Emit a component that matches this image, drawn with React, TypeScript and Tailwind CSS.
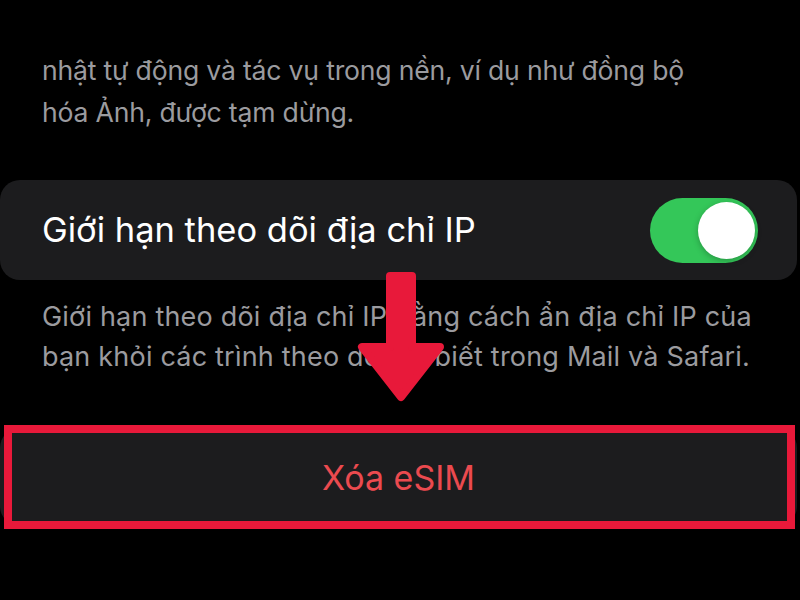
import React from "react";

function Toggle() {
  return (
    <div className="relative h-[65px] w-[108px] rounded-full bg-[#34c759]">
      <div className="absolute right-[3px] top-[4px] h-[57px] w-[57px] rounded-full bg-white shadow-[0_2px_6px_rgba(0,0,0,0.25)]" />
    </div>
  );
}

function DownArrow() {
  return (
    <svg
      className="pointer-events-none absolute left-[356px] top-[270px]"
      width="90"
      height="134"
      viewBox="0 0 90 134"
    >
      <path
        d="M34 6 L56 6 L56 77 L84 77 L45 127 L6 77 L34 77 Z"
        fill="#e8193a"
        stroke="#e8193a"
        strokeWidth="8"
        strokeLinejoin="round"
      />
    </svg>
  );
}

export default function App() {
  return (
    <div
      className="relative h-[600px] w-[800px] overflow-hidden bg-black"
      style={{ fontFamily: "Inter, 'Noto Sans', sans-serif" }}
    >
      <div className="flex flex-col">
        <p className="pl-[42px] pr-[40px] pt-[49px] text-[26.6px] leading-[42px] tracking-[-0.2px] text-[#9b9b9f]">
          nhật tự động và tác vụ trong nền, ví dụ như đồng bộ
          <br />
          hóa Ảnh, được tạm dừng.
        </p>

        <div className="mt-[47px] mr-[3px] flex h-[100px] items-center justify-between rounded-[20px] bg-[#1c1c1e] pl-[42px] pr-[39px]">
          <span className="text-[34.5px] text-white">Giới hạn theo dõi địa chỉ IP</span>
          <Toggle />
        </div>

        <p className="mt-[17px] pl-[42px] pr-[10px] text-[27px] leading-[40px] tracking-[0.2px] text-[#9b9b9f]">
          Giới hạn theo dõi địa chỉ IP bằng cách ẩn địa chỉ IP của
          <br />
          bạn khỏi các trình theo dõi đã biết trong Mail và Safari.
        </p>

        <div className="relative mt-[51px] mr-[3px] flex h-[98px] items-center justify-center rounded-[20px] bg-[#1c1c1e]">
          <span className="text-[34px] text-[#eb4a4f]">Xóa eSIM</span>
          <div className="pointer-events-none absolute left-[4px] right-[2px] top-[-3px] bottom-[-3px] border-[8px] border-[#e8193a]" />
        </div>
      </div>
      <DownArrow />
    </div>
  );
}
